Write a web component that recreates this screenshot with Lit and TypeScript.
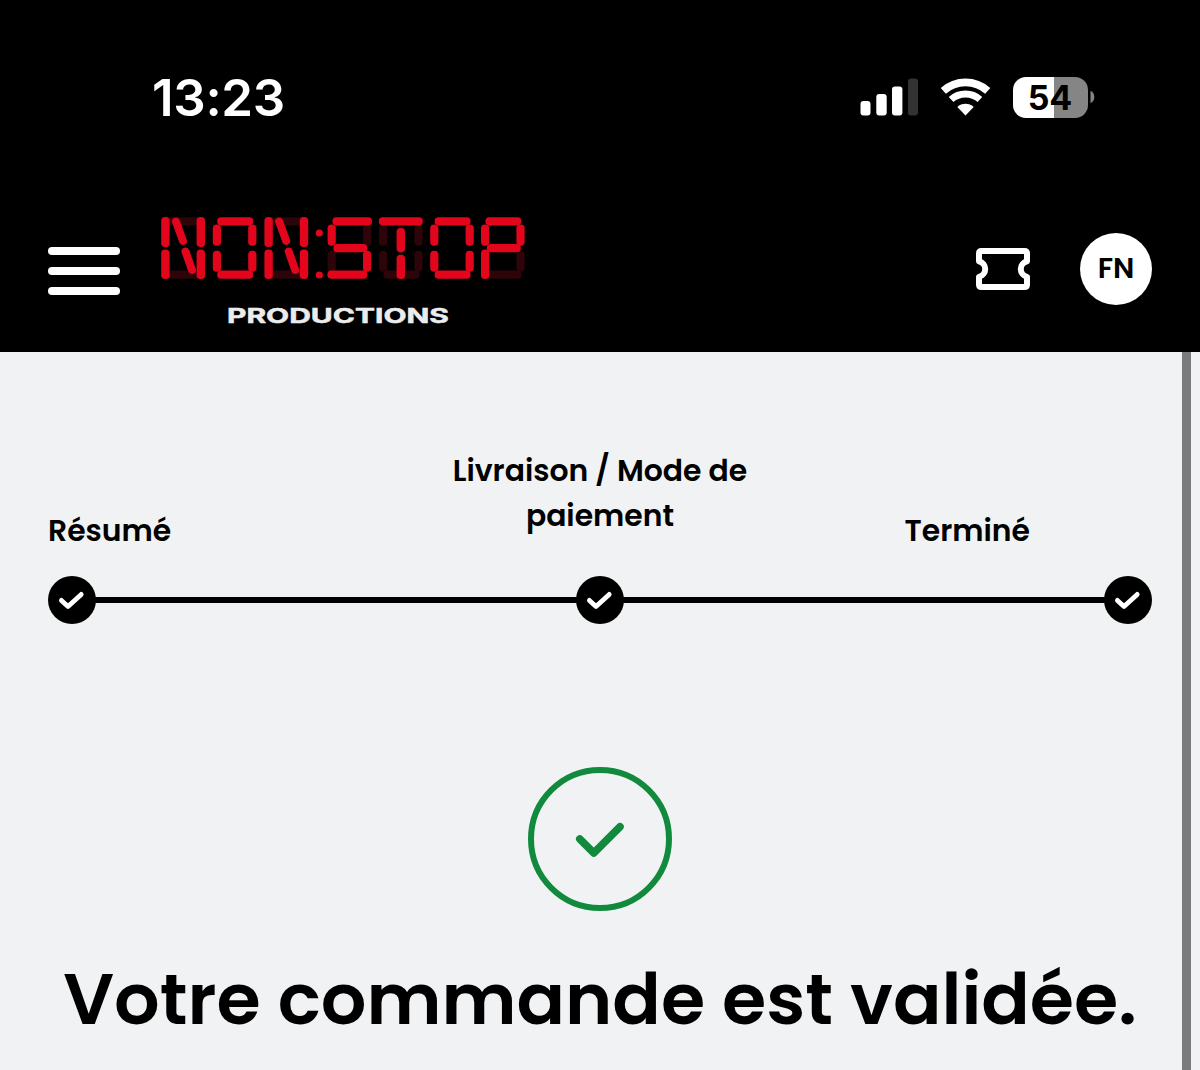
import { css, html, LitElement, svg } from "lit";
import { customElement } from "lit/decorators.js";

type Segment = [x: number, y: number, width: number, height: number];

interface Digit {
  x: number;
  on: Segment[];
  off?: Segment[];
  slanted?: boolean;
}

// Lamps of one display cell, 44 x 62
const TOP: Segment = [4.6, 0.2, 36, 8.2];
const MIDDLE: Segment = [6, 27, 34, 8.2];
const BOTTOM: Segment = [4.6, 53.6, 36, 8.2];
const UPPER_LEFT: Segment = [0.2, 7.4, 8.2, 21.4];
const UPPER_RIGHT: Segment = [35.6, 7.4, 8.2, 21.4];
const LOWER_LEFT: Segment = [0.2, 33.8, 8.2, 21];
const LOWER_RIGHT: Segment = [35.6, 33.8, 8.2, 21];

const N: Segment[] = [
  [0.2, 0, 8.4, 30],
  [0.2, 32.6, 8.4, 29.4],
  [35.6, 0, 8.4, 30],
  [35.6, 32.6, 8.4, 29.4],
];
const O = [TOP, BOTTOM, UPPER_LEFT, UPPER_RIGHT, LOWER_LEFT, LOWER_RIGHT];

const DIGITS: Digit[] = [
  { x: 1, on: N, off: [TOP, BOTTOM], slanted: true },
  { x: 52.6, on: O },
  { x: 104.2, on: N, off: [TOP, BOTTOM], slanted: true },
  {
    x: 167.4,
    on: [[5, 0.2, 39.6, 8.2], MIDDLE, [0, 53.6, 40, 8.2], UPPER_LEFT, LOWER_RIGHT],
    off: [UPPER_RIGHT, LOWER_LEFT],
  },
  {
    x: 218.8,
    on: [
      [0, 0.2, 44, 8.2],
      [17.8, 11, 8.4, 24.4],
      [17.8, 37.8, 8.4, 24.2],
    ],
    off: [BOTTOM, UPPER_LEFT, UPPER_RIGHT, LOWER_LEFT, LOWER_RIGHT],
  },
  { x: 270, on: O },
  {
    x: 320.8,
    on: [TOP, MIDDLE, UPPER_LEFT, UPPER_RIGHT, [0.2, 32.6, 8.2, 29.4]],
    off: [BOTTOM, LOWER_RIGHT],
  },
];

@customElement("brand-logo")
export class BrandLogo extends LitElement {
  static styles = css`
    :host {
      display: block;
    }

    svg {
      display: block;
    }

    .on {
      fill: #e3051b;
    }

    .off {
      fill: #2c0409;
    }

    .slant {
      stroke: #e3051b;
      stroke-width: 8;
      stroke-linecap: round;
    }

    .display {
      filter: blur(0.6px);
    }

    .name {
      font-family: Inter, "Liberation Sans", sans-serif;
      font-size: 20.5px;
      font-weight: 700;
      fill: #ececec;
      stroke: #ececec;
      stroke-width: 0.5px;
    }
  `;

  private _lamp([x, y, w, h]: Segment, state: string) {
    return svg`<rect class=${state} x=${x} y=${y} width=${w} height=${h} rx="3.8" />`;
  }

  render() {
    return html`
      <svg width="370" height="114" viewBox="0 0 370 114">
        <g class="display">
          ${DIGITS.map(
            (d) => svg`
              <g transform="translate(${d.x} 1)">
                ${(d.off ?? []).map((s) => this._lamp(s, "off"))}
                ${d.on.map((s) => this._lamp(s, "on"))}
                ${
                  d.slanted
                    ? svg`
                      <line class="slant" x1="15" y1="4.5" x2="22" y2="24" />
                      <line class="slant" x1="24.5" y1="34.5" x2="31" y2="53" />`
                    : ""
                }
              </g>
            `
          )}
          <circle class="on" cx="159.3" cy="17" r="3.6" />
          <circle class="on" cx="159.3" cy="59" r="3.6" />
        </g>
        <text
          class="name"
          x="67"
          y="107.4"
          textLength="222"
          lengthAdjust="spacingAndGlyphs"
        >PRODUCTIONS</text>
      </svg>
    `;
  }
}

@customElement("status-bar")
export class StatusBar extends LitElement {
  static styles = css`
    :host {
      display: flex;
      justify-content: space-between;
      align-items: center;
      height: 62px;
      padding: 66px 105px 0 152px;
      color: #fff;
      font-family: Inter, "Liberation Sans", sans-serif;
    }

    .time {
      padding-top: 2px;
      font-size: 51px;
      font-weight: 600;
      line-height: 62px;
      letter-spacing: -0.3px;
    }

    .indicators {
      display: flex;
      align-items: center;
    }

    .signal {
      margin-right: 22px;
    }

    .wifi {
      margin-right: 22px;
    }

    .battery {
      display: flex;
      align-items: center;
      gap: 2px;
    }

    .charge {
      width: 75px;
      height: 41px;
      border-radius: 13px;
      background: linear-gradient(90deg, #fff 41px, #858585 41px);
      color: #000;
      font-size: 34px;
      font-weight: 700;
      line-height: 42px;
      text-align: center;
      text-indent: -1px;
    }
  `;

  render() {
    return html`
      <span class="time">13:23</span>
      <div class="indicators">
        <svg class="signal" width="58" height="38" viewBox="0 0 58 38" fill="#fff">
          <rect x="0.5" y="23" width="10" height="14.6" rx="3" />
          <rect x="16.3" y="16" width="10.4" height="21.6" rx="3" />
          <rect x="32" y="8.5" width="10.4" height="29.1" rx="3" />
          <rect x="48" y="0.6" width="10" height="37" rx="3" fill="#333" />
        </svg>
        <svg class="wifi" width="51" height="38" viewBox="0 0 51 38">
          <g fill="none" stroke="#fff">
            <path d="M3.3 12.8A33.2 33.2 0 0 1 47.7 12.8" stroke-width="7.7" />
            <path d="M11.1 21.5A21.5 21.5 0 0 1 39.9 21.5" stroke-width="7" />
          </g>
          <path d="M25.5 37.5L17.3 28.9A12 12 0 0 1 33.7 28.9Z" fill="#fff" />
        </svg>
        <div class="battery">
          <div class="charge">54</div>
          <svg width="5" height="14" viewBox="0 0 5 14">
            <path d="M0.5 0.8C5.6 3 5.6 11 0.5 13.2Z" fill="#858585" />
          </svg>
        </div>
      </div>
    `;
  }
}

@customElement("app-root")
export class AppRoot extends LitElement {
  static styles = css`
    :host {
      display: flex;
      flex-direction: column;
      height: 1070px;
      overflow: hidden;
      background: #f0f2f4;
      color: #000;
      font-family: Poppins, Inter, "Liberation Sans", sans-serif;
    }

    header {
      height: 352px;
      flex: none;
      background: #000;
    }

    .nav {
      display: flex;
      align-items: flex-start;
      padding: 88px 48px 0;
    }

    .menu {
      display: flex;
      flex-direction: column;
      gap: 12px;
      width: 72px;
      margin: 31px 40px 0 0;
    }

    .menu span {
      height: 8px;
      border-radius: 4px;
      background: #fff;
    }

    .ticket {
      margin: 32px 50px 0 auto;
    }

    .avatar {
      width: 72px;
      height: 72px;
      margin-top: 17px;
      border-radius: 50%;
      background: #fff;
      font-size: 29px;
      font-weight: 600;
      line-height: 70px;
      text-align: center;
    }

    .page {
      display: flex;
      flex: 1;
    }

    main {
      display: flex;
      flex-direction: column;
      align-items: center;
      flex: 1;
      padding: 96px 30px 0 48px;
    }

    .scrollbar {
      width: 9px;
      margin-right: 9px;
      background: #7a7b7d;
    }

    .labels {
      display: grid;
      grid-template-columns: 368px 368px 368px;
      align-items: end;
      width: 1104px;
      height: 104px;
      font-size: 29.85px;
      font-weight: 600;
      line-height: 45px;
    }

    .current {
      padding: 0 30px 15px;
      text-align: center;
    }

    .last {
      padding-right: 122px;
      text-align: right;
    }

    .steps {
      display: flex;
      align-items: center;
      width: 1104px;
      margin-top: 24px;
    }

    .line {
      flex: 1;
      height: 6px;
      margin: 0 -1px;
      background: #000;
    }

    .done {
      margin-top: 143px;
    }

    h1 {
      margin: 37px 0 0;
      font-size: 71.6px;
      font-weight: 600;
      line-height: 103px;
      white-space: nowrap;
    }
  `;

  private _dot() {
    return html`
      <svg width="48" height="48" viewBox="0 0 48 48" fill="none">
        <circle cx="24" cy="24" r="24" fill="#000" />
        <path
          d="M13.4 24.4L20 30.6L33.2 18.4"
          stroke="#fff"
          stroke-width="4.8"
          stroke-linecap="round"
          stroke-linejoin="round"
        />
      </svg>
    `;
  }

  render() {
    return html`
      <header>
        <status-bar></status-bar>
        <div class="nav">
          <div class="menu"><span></span><span></span><span></span></div>
          <brand-logo></brand-logo>
          <svg class="ticket" width="54" height="42" viewBox="0 0 54 42" fill="none">
            <path
              d="M5.5 3H48.5Q51 3 51 5.5V13.2A8 8 0 0 0 51 28.8V36.5Q51 39 48.5 39H5.5Q3 39 3 36.5V28.8A8 8 0 0 0 3 13.2V5.5Q3 3 5.5 3Z"
              stroke="#fff"
              stroke-width="6"
              stroke-linejoin="round"
            />
          </svg>
          <div class="avatar">FN</div>
        </div>
      </header>
      <div class="page">
        <main>
          <div class="labels">
            <span>Résumé</span>
            <span class="current">Livraison / Mode de paiement</span>
            <span class="last">Terminé</span>
          </div>
          <div class="steps">
            ${this._dot()}
            <div class="line"></div>
            ${this._dot()}
            <div class="line"></div>
            ${this._dot()}
          </div>
          <svg class="done" width="144" height="144" viewBox="0 0 144 144" fill="none">
            <g stroke="#128a3e" stroke-linecap="round" stroke-linejoin="round">
              <circle cx="72" cy="72" r="69" stroke-width="6" />
              <path d="M51.8 72L65.8 86L92 59.8" stroke-width="7.6" />
            </g>
          </svg>
          <h1>Votre commande est validée.</h1>
        </main>
        <div class="scrollbar"></div>
      </div>
    `;
  }
}
